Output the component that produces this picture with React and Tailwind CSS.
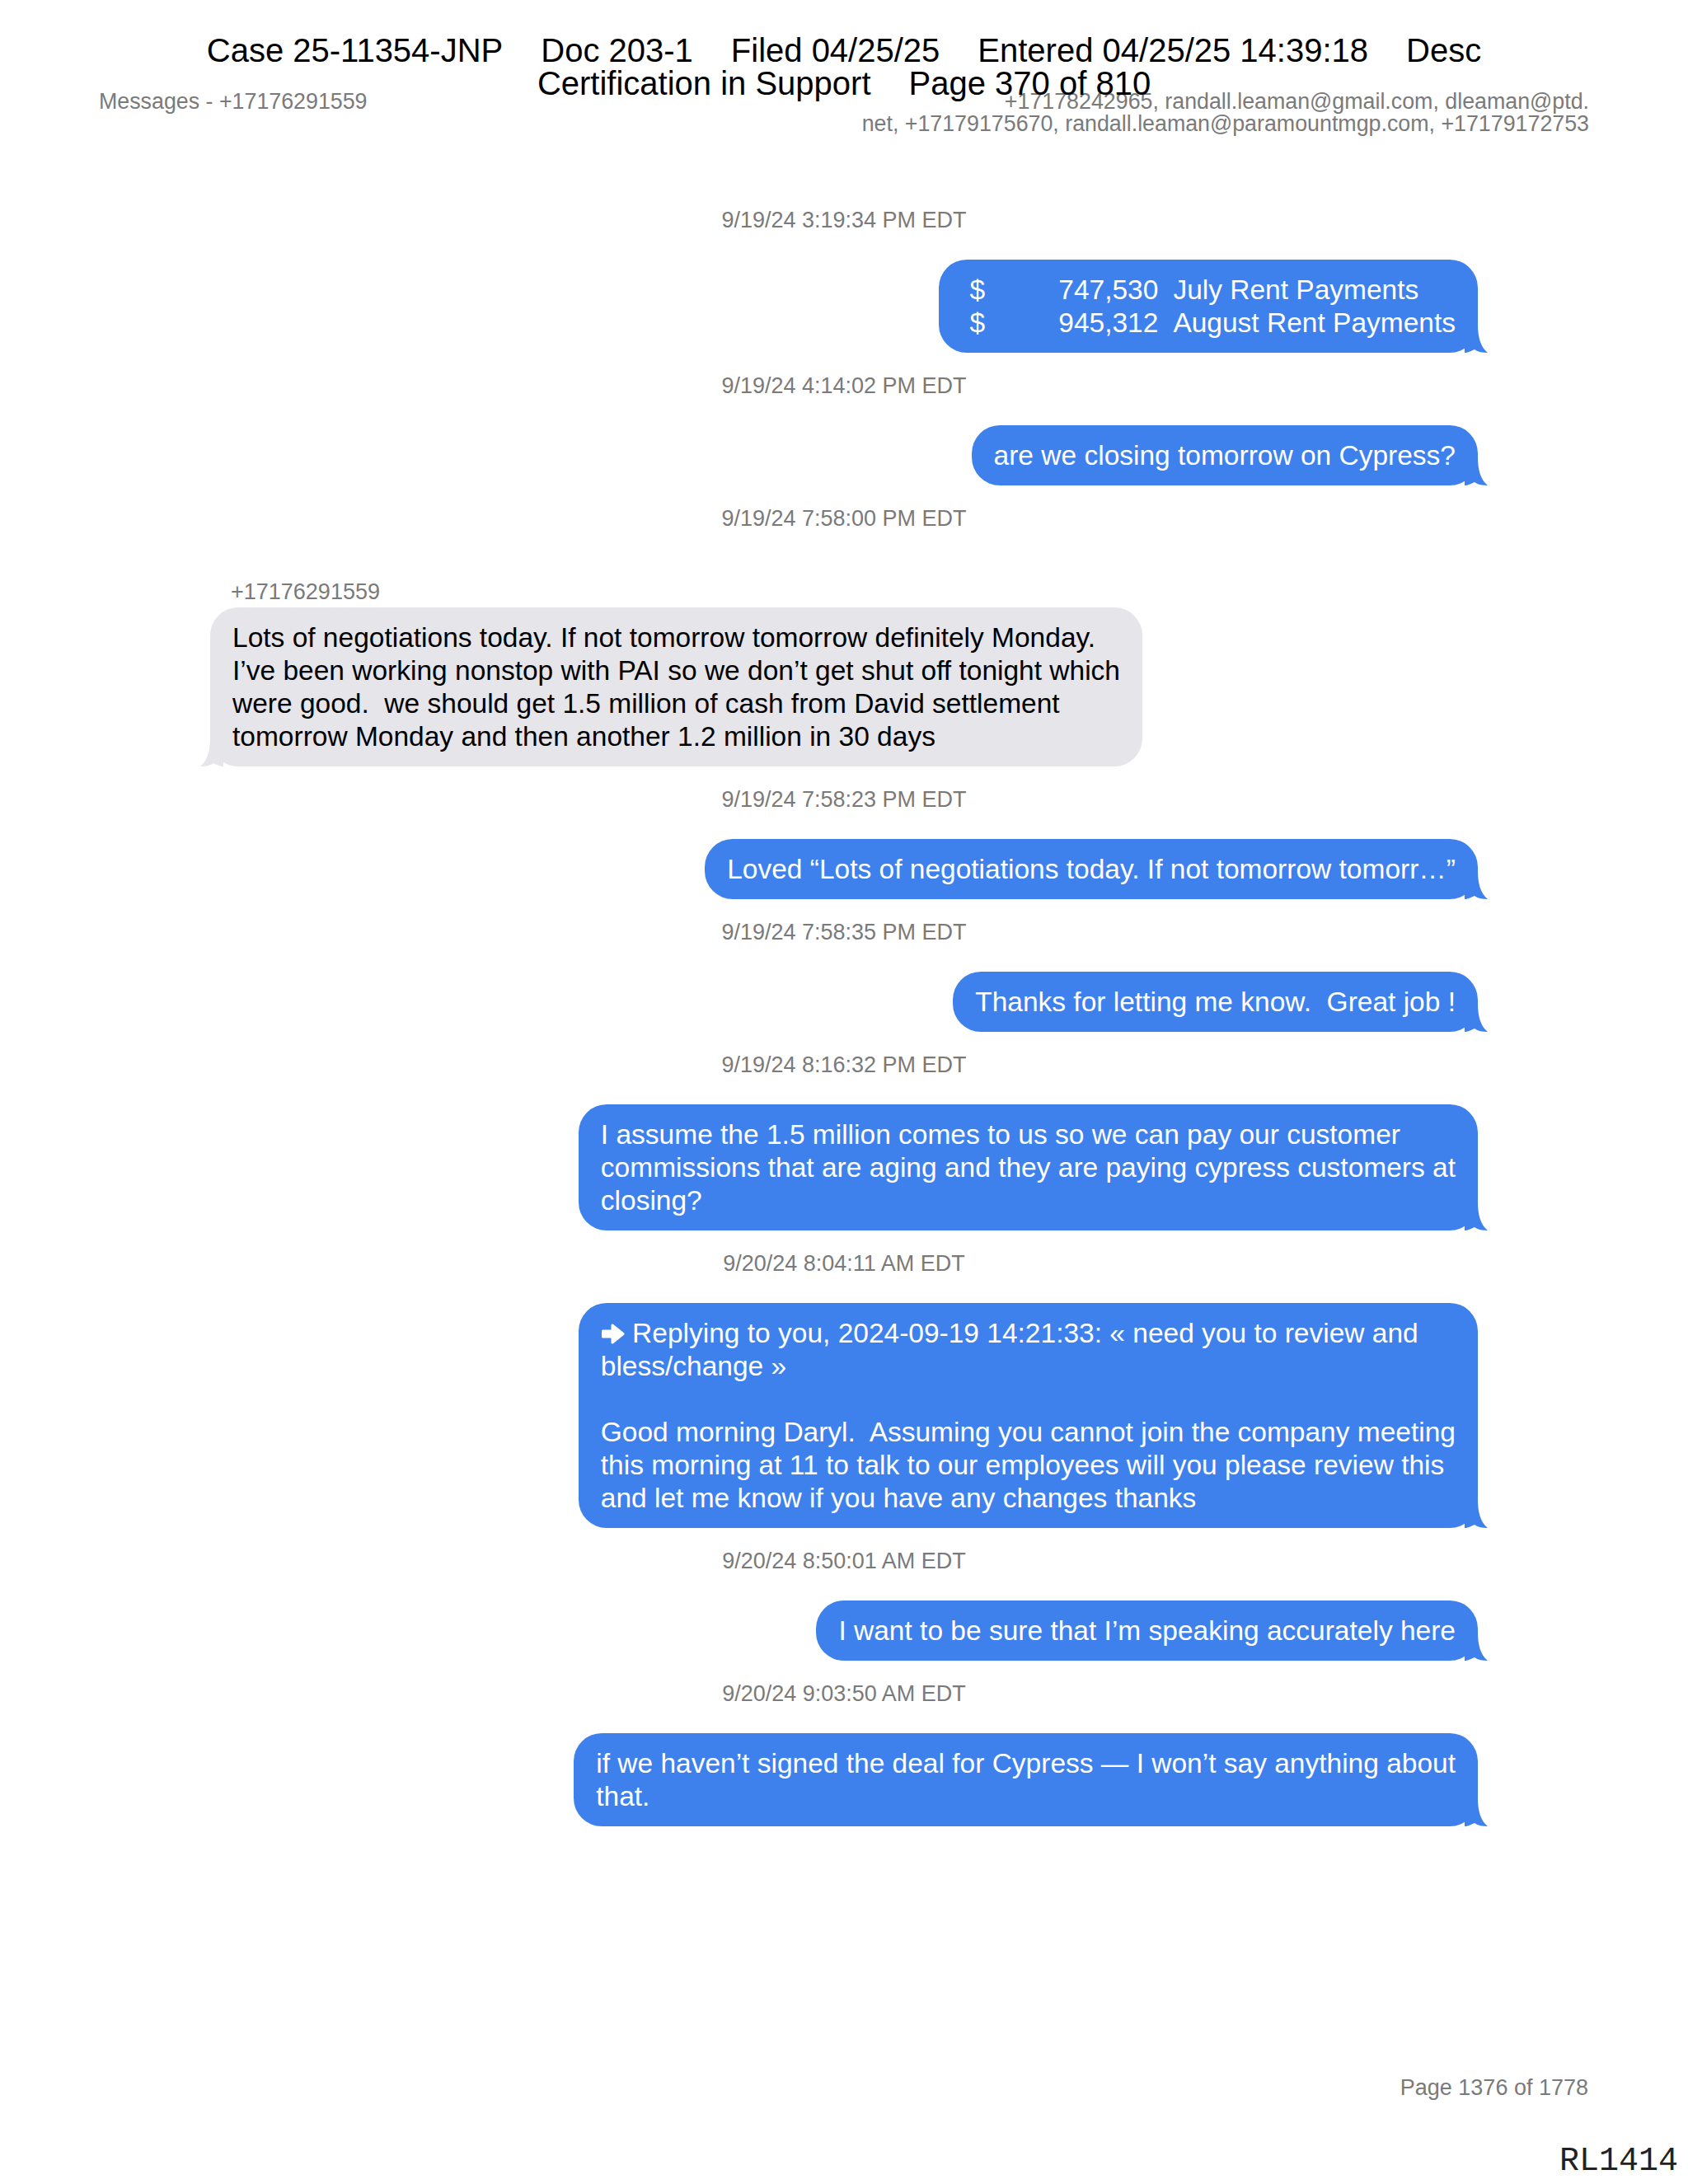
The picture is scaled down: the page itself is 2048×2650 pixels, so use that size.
const BLUE = "#3e81ec";
const GRAY = "#e5e5ea";

function Tail({ incoming }) {
  if (incoming) {
    return (
      <svg className="absolute bottom-0 left-[-12px] w-[28px] h-[34px]" viewBox="0 0 28 34">
        <path d="M28 0 H12 C12 14 9 27 0 34 C6 34 12 33 16 30 C20 32 24 34 28 34 Z" fill={GRAY} />
      </svg>
    );
  }
  return (
    <svg className="absolute bottom-0 right-[-12px] w-[28px] h-[34px]" viewBox="0 0 28 34">
      <path d="M0 0 H16 C16 14 19 27 28 34 C22 34 16 33 12 30 C8 32 4 34 0 34 Z" fill={BLUE} />
    </svg>
  );
}

function Stamp({ children }) {
  return (
    <div className="mt-[27px] mb-[34px] text-center text-[27px] leading-[27px] text-[#7a7a7a]">
      {children}
    </div>
  );
}

function Bubble({ incoming, children }) {
  if (incoming) {
    return (
      <div className="relative self-start rounded-[34px] bg-[#e5e5ea] px-[27px] py-[16.5px] text-[33.5px] leading-[40px] text-black whitespace-pre">
        {children}
        <Tail incoming />
      </div>
    );
  }
  return (
    <div className="relative self-end rounded-[34px] bg-[#3e81ec] px-[27px] py-[16.5px] text-[33.5px] leading-[40px] text-white whitespace-pre">
      {children}
      <Tail />
    </div>
  );
}

function Lines({ lines }) {
  return lines.map((line, i) => <div key={i}>{line || "\u00a0"}</div>);
}

function ReplyArrow() {
  return (
    <svg className="inline-block w-[29px] h-[27px] align-[-3px]" viewBox="0 0 29 27">
      <path
        d="M2.5 10 H14 V3 L27 13.5 L14 24 V17 H2.5 Z"
        fill="white"
        stroke="white"
        strokeWidth="3"
        strokeLinejoin="round"
      />
    </svg>
  );
}

export default function App() {
  return (
    <div className="relative flex flex-col w-[2048px] h-[2650px] bg-white font-['Liberation_Sans',Arial,sans-serif]">
      {/* court filing stamp, printed over the page */}
      <div className="absolute top-[41px] left-0 right-0 flex flex-col items-center text-[40px] leading-[40px] text-black">
        <div className="flex gap-[46px]">
          <span>Case 25-11354-JNP</span>
          <span>Doc 203-1</span>
          <span>Filed 04/25/25</span>
          <span>Entered 04/25/25 14:39:18</span>
          <span>Desc</span>
        </div>
        <div className="flex gap-[46px]">
          <span>Certification in Support</span>
          <span>Page 370 of 810</span>
        </div>
      </div>

      <header className="flex justify-between items-start px-[120px] pt-[110px] text-[26.8px] leading-[27px] text-[#7a7a7a]">
        <div>Messages - +17176291559</div>
        <div className="text-right">
          <div>+17178242965, randall.leaman@gmail.com, dleaman@ptd.</div>
          <div>net, +17179175670, randall.leaman@paramountmgp.com, +17179172753</div>
        </div>
      </header>

      <main className="flex flex-col px-[255px] pt-[63px]">
        <Stamp>9/19/24 3:19:34 PM EDT</Stamp>
        <Bubble>
          <div className="flex">
            <span className="flex justify-between w-[239px] pl-[10px]">
              <span>$</span>
              <span>747,530</span>
            </span>
            <span className="pl-[18px]">July Rent Payments</span>
          </div>
          <div className="flex">
            <span className="flex justify-between w-[239px] pl-[10px]">
              <span>$</span>
              <span>945,312</span>
            </span>
            <span className="pl-[18px]">August Rent Payments</span>
          </div>
        </Bubble>

        <Stamp>9/19/24 4:14:02 PM EDT</Stamp>
        <Bubble>are we closing tomorrow on Cypress?</Bubble>

        <Stamp>9/19/24 7:58:00 PM EDT</Stamp>
        <div className="mt-[28px] mb-[5px] pl-[25px] text-[27px] leading-[27px] text-[#7a7a7a]">+17176291559</div>
        <Bubble incoming>
          <Lines
            lines={[
              "Lots of negotiations today. If not tomorrow tomorrow definitely Monday.",
              "I’ve been working nonstop with PAI so we don’t get shut off tonight which",
              "were good.  we should get 1.5 million of cash from David settlement",
              "tomorrow Monday and then another 1.2 million in 30 days",
            ]}
          />
        </Bubble>

        <Stamp>9/19/24 7:58:23 PM EDT</Stamp>
        <Bubble>Loved “Lots of negotiations today. If not tomorrow tomorr…”</Bubble>

        <Stamp>9/19/24 7:58:35 PM EDT</Stamp>
        <Bubble>Thanks for letting me know.  Great job !</Bubble>

        <Stamp>9/19/24 8:16:32 PM EDT</Stamp>
        <Bubble>
          <Lines
            lines={[
              "I assume the 1.5 million comes to us so we can pay our customer",
              "commissions that are aging and they are paying cypress customers at",
              "closing?",
            ]}
          />
        </Bubble>

        <Stamp>9/20/24 8:04:11 AM EDT</Stamp>
        <Bubble>
          <div>
            <ReplyArrow /> Replying to you, 2024-09-19 14:21:33: « need you to review and
          </div>
          <Lines
            lines={[
              "bless/change »",
              "",
              "Good morning Daryl.  Assuming you cannot join the company meeting",
              "this morning at 11 to talk to our employees will you please review this",
              "and let me know if you have any changes thanks",
            ]}
          />
        </Bubble>

        <Stamp>9/20/24 8:50:01 AM EDT</Stamp>
        <Bubble>I want to be sure that I’m speaking accurately here</Bubble>

        <Stamp>9/20/24 9:03:50 AM EDT</Stamp>
        <Bubble>
          <Lines
            lines={[
              "if we haven’t signed the deal for Cypress — I won’t say anything about",
              "that.",
            ]}
          />
        </Bubble>
      </main>

      <footer className="mt-auto flex flex-col items-end">
        <div className="pr-[121px] text-[27px] leading-[27px] text-[#7a7a7a]">Page 1376 of 1778</div>
        <div className="mt-[56px] pr-[12px] pb-[7px] text-[40px] leading-[40px] text-[#222] font-['Liberation_Mono','Courier_New',monospace]">
          RL1414
        </div>
      </footer>
    </div>
  );
}
